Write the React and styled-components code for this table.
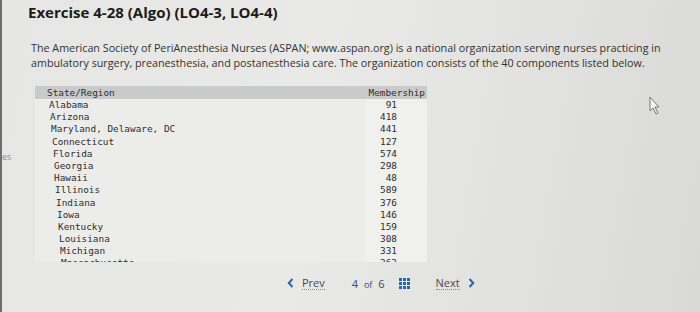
import styled, { createGlobalStyle } from 'styled-components';

const Global = createGlobalStyle`
  html, body {
    margin: 0;
    padding: 0;
    width: 700px;
    height: 312px;
    overflow: hidden;
  }
  body {
    background: linear-gradient(100deg, #e6e6e4 0%, #e9e9e7 45%, #e1e1df 75%, #d9d9d7 100%);
    font-family: "Open Sans", "Liberation Sans", sans-serif;
  }
`;

const Frame = styled.div`
  position: relative;
  width: 700px;
  height: 312px;
  box-sizing: border-box;
  border-left: 2px solid #6d6d6d;
  overflow: hidden;
`;

const Content = styled.div`
  padding-left: 26px;
  display: flex;
  flex-direction: column;
`;

const Title = styled.h2`
  margin: 0;
  padding-top: 2px;
  font-family: "Open Sans", "Liberation Sans", sans-serif;
  font-weight: 700;
  font-size: 15px;
  line-height: 20px;
  color: #1c1c1c;
`;

const Intro = styled.p`
  margin: 19px 0 0 3px;
  width: 655px;
  font-size: 10.75px;
  line-height: 15px;
  color: #333;
`;

const TableBox = styled.div`
  margin: 15px 0 0 7px;
  width: 392px;
  height: 176px;
  overflow: hidden;
  background: #ececeb;
`;

const Grid = styled.div`
  display: grid;
  grid-template-columns: 1fr 62px;
  font-family: "DejaVu Sans Mono", "Liberation Mono", monospace;
  font-size: 9.4px;
  color: #2e2e2e;
`;

const Head = styled.div`
  background: #c9cacc;
  height: 13px;
  line-height: 13px;
  padding: ${(p) => (p.$right ? '0 2px 0 0' : '0 0 0 12px')};
  text-align: ${(p) => (p.$right ? 'right' : 'left')};
`;

const Cell = styled.div`
  height: 12.2px;
  line-height: 12.2px;
  white-space: nowrap;
  padding-left: ${(p) => p.$indent}px;
  text-align: ${(p) => (p.$right ? 'right' : 'left')};
  padding-right: ${(p) => (p.$right ? '30px' : '0')};
  background: ${(p) => (p.$right ? '#f0f0ef' : 'transparent')};
`;

const Nav = styled.div`
  display: flex;
  align-items: center;
  margin: 14px 0 0 259px;
  height: 14px;
  font-size: 11px;
  color: #4a4a4a;
`;

const NavLink = styled.span`
  display: flex;
  align-items: center;
  gap: 8px;
  span {
    border-bottom: 1px dotted #8a8a8a;
    line-height: 12px;
  }
`;

const Pager = styled.span`
  margin: 0 14px 0 27px;
  color: #2f4f75;
  small {
    font-size: 9px;
    margin: 0 3px;
  }
`;

const Dots = styled.span`
  display: grid;
  grid-template-columns: repeat(3, 3px);
  gap: 1px;
  margin-right: 26px;
  i {
    width: 3px;
    height: 3px;
    background: #2d66a8;
  }
`;

const Side = styled.span`
  position: absolute;
  left: 0;
  top: 150px;
  font-size: 9px;
  color: #8c8c8c;
`;

const Cursor = styled.svg`
  position: absolute;
  left: 646px;
  top: 96px;
`;

const rows = [
  ['Alabama', 91],
  ['Arizona', 418],
  ['Maryland, Delaware, DC', 441],
  ['Connecticut', 127],
  ['Florida', 574],
  ['Georgia', 298],
  ['Hawaii', 48],
  ['Illinois', 589],
  ['Indiana', 376],
  ['Iowa', 146],
  ['Kentucky', 159],
  ['Louisiana', 308],
  ['Michigan', 331],
  ['Massachusetts', 363],
];

const Chevron = ({ dir }) => (
  <svg width="7" height="10" viewBox="0 0 7 10">
    <path
      d={dir === 'left' ? 'M5.5 1 L1.8 5 L5.5 9' : 'M1.5 1 L5.2 5 L1.5 9'}
      fill="none"
      stroke="#2d66a8"
      strokeWidth="2"
    />
  </svg>
);

export default function App() {
  return (
    <>
      <Global />
      <Frame>
        <Side>es</Side>
        <Content>
          <Title>Exercise 4-28 (Algo) (LO4-3, LO4-4)</Title>
          <Intro>
            The American Society of PeriAnesthesia Nurses (ASPAN; www.aspan.org) is a national organization serving nurses practicing in
            ambulatory surgery, preanesthesia, and postanesthesia care. The organization consists of the 40 components listed below.
          </Intro>
          <TableBox>
            <Grid>
              <Head>State/Region</Head>
              <Head $right>Membership</Head>
              {rows.map(([name, n], i) => [
                <Cell key={name} $indent={14 + Math.round(i * 0.9)}>{name}</Cell>,
                <Cell key={name + 'n'} $right>{n}</Cell>,
              ])}
            </Grid>
          </TableBox>
          <Nav>
            <NavLink>
              <Chevron dir="left" />
              <span>Prev</span>
            </NavLink>
            <Pager>
              4 <small>of</small> 6
            </Pager>
            <Dots>
              {Array.from({ length: 9 }).map((_, i) => (
                <i key={i} />
              ))}
            </Dots>
            <NavLink>
              <span>Next</span>
              <Chevron dir="right" />
            </NavLink>
          </Nav>
        </Content>
        <Cursor width="14" height="20" viewBox="0 0 14 20">
          <path d="M2 1 L2 15 L5 12 L8 18 L10 17 L7 11 L11 11 Z" fill="#f2f2f2" stroke="#777" strokeWidth="1" />
        </Cursor>
      </Frame>
    </>
  );
}
